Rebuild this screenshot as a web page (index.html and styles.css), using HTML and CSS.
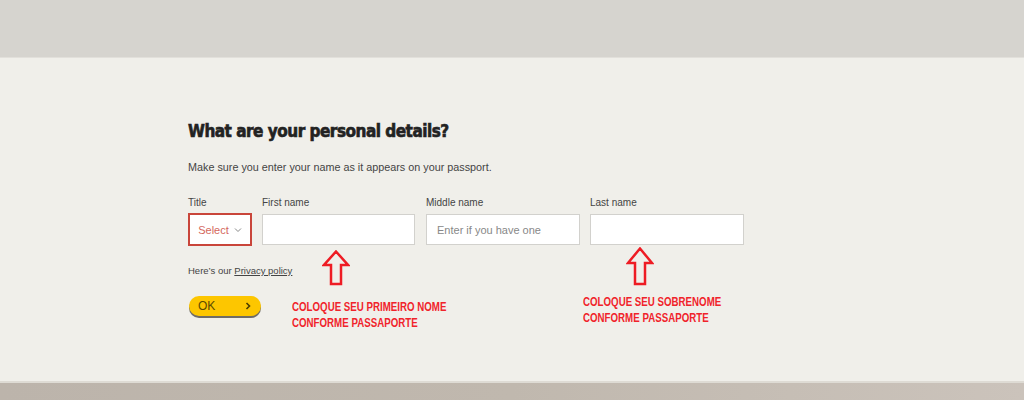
FILE: index.html
```html
<!DOCTYPE html>
<html>
<head>
<meta charset="utf-8">
<link rel="stylesheet" href="styles.css">
</head>
<body>
<div class="topband"></div>
<main class="main">
  <div class="form">
    <h1 class="title">What are your personal details?</h1>
    <p class="lead">Make sure you enter your name as it appears on your passport.</p>
    <div class="fields">
      <div class="field">
        <span class="label">Title</span>
        <div class="select">Select <svg class="chev" width="8" height="6" viewBox="0 0 8 6"><path d="M1 1.5 L4 4.5 L7 1.5" fill="none" stroke="#888" stroke-width="1"/></svg></div>
      </div>
      <div class="field field-first">
        <span class="label">First name</span>
        <div class="input"></div>
      </div>
      <div class="field field-wide">
        <span class="label">Middle name</span>
        <div class="input placeholder">Enter if you have one</div>
      </div>
      <div class="field field-wide">
        <span class="label">Last name</span>
        <div class="input"></div>
      </div>
    </div>
    <p class="privacy">Here’s our <a class="link">Privacy policy</a></p>
    <div class="btnrow">
      <button class="ok"><span>OK</span><svg width="6" height="8" viewBox="0 0 6 8"><path d="M1.5 1 L4.5 4 L1.5 7" fill="none" stroke="#4a3d00" stroke-width="1.6"/></svg></button>
    </div>

    <svg class="arrow arrow1" width="28" height="36" viewBox="0 0 28 36"><path d="M14 1.5 L26 15 L19 15 L19 34 L9 34 L9 15 L2 15 Z" fill="none" stroke="#ee1c24" stroke-width="2.5" stroke-linejoin="miter"/></svg>
    <svg class="arrow arrow2" width="28" height="39" viewBox="0 0 28 39"><path d="M14 1.5 L26 16 L19 16 L19 37 L9 37 L9 16 L2 16 Z" fill="none" stroke="#ee1c24" stroke-width="2.5" stroke-linejoin="miter"/></svg>
    <div class="note note1">COLOQUE SEU PRIMEIRO NOME<br>CONFORME PASSAPORTE</div>
    <div class="note note2">COLOQUE SEU SOBRENOME<br>CONFORME PASSAPORTE</div>
  </div>
</main>
<div class="bottomband"></div>
</body>
</html>
```

FILE: styles.css
```css
html, body {
  margin: 0;
  padding: 0;
}
body {
  width: 1024px;
  height: 400px;
  overflow: hidden;
  background: #f0efea;
  font-family: "Liberation Sans", Arial, sans-serif;
  color: #333;
}
.topband {
  height: 57px;
  background: #d6d4cf;
  border-bottom: 1px solid #e2e0db;
}
.main {
  height: 323px;
  background: #f0efea;
  border-bottom: 2px solid #dedbd4;
}
.bottomband {
  height: 17px;
  background: linear-gradient(90deg, #bcb4ab 0%, #c0b8ae 50%, #cbc3bb 100%);
}
.form {
  position: relative;
  padding: 63px 0 0 188px;
}
.title {
  margin: 0;
  font-family: "DejaVu Sans Condensed", "DejaVu Sans", sans-serif;
  font-weight: bold;
  font-size: 17px;
  line-height: 20px;
  letter-spacing: -0.5px;
  color: #222;
  -webkit-text-stroke: 0.6px #222;
}
.lead {
  margin: 19px 0 0 0;
  font-size: 10.8px;
  line-height: 14px;
  color: #444;
}
.fields {
  display: flex;
  gap: 10px;
  margin-top: 23px;
}
.field {
  display: flex;
  flex-direction: column;
}
.label {
  font-size: 10px;
  line-height: 12px;
  color: #444;
  margin-bottom: 4px;
}
.select {
  box-sizing: border-box;
  width: 64px;
  height: 33px;
  border: 2px solid #c9453a;
  background: #fff;
  color: #d4685d;
  font-size: 11px;
  display: flex;
  align-items: center;
  justify-content: center;
  gap: 5px;
}
.input {
  box-sizing: border-box;
  height: 31px;
  margin-top: 1px;
  border: 1px solid #d2d1cd;
  background: #fff;
  font-size: 11px;
  display: flex;
  align-items: center;
  padding-left: 10px;
}
.field-first .input {
  width: 153px;
  margin-right: 1px;
}
.field-wide .input {
  width: 154px;
}
.placeholder {
  color: #888;
}
.privacy {
  margin: 19px 0 0 0;
  font-size: 9.5px;
  line-height: 12px;
  color: #444;
}
.link {
  color: #444;
  text-decoration: underline;
}
.btnrow {
  margin-top: 19px;
}
.ok {
  box-sizing: border-box;
  width: 72px;
  height: 20px;
  margin-left: 1px;
  border: none;
  border-radius: 10px;
  background: #fdc600;
  box-shadow: 0 2px 0 #6f6c66;
  display: flex;
  align-items: center;
  justify-content: space-between;
  padding: 0 10px 0 9px;
  font-family: "Liberation Sans", Arial, sans-serif;
  font-size: 12px;
  color: #5b4b00;
}
.arrow {
  position: absolute;
}
.arrow1 {
  left: 322px;
  top: 192px;
}
.arrow2 {
  left: 626px;
  top: 189px;
}
.note {
  position: absolute;
  font-family: "Liberation Sans", Arial, sans-serif;
  font-weight: bold;
  font-size: 12px;
  line-height: 16px;
  color: #f0232a;
  transform: scaleX(0.81);
  transform-origin: 0 0;
  white-space: nowrap;
}
.note1 {
  left: 292px;
  top: 241px;
}
.note2 {
  left: 583px;
  top: 236px;
}
```
